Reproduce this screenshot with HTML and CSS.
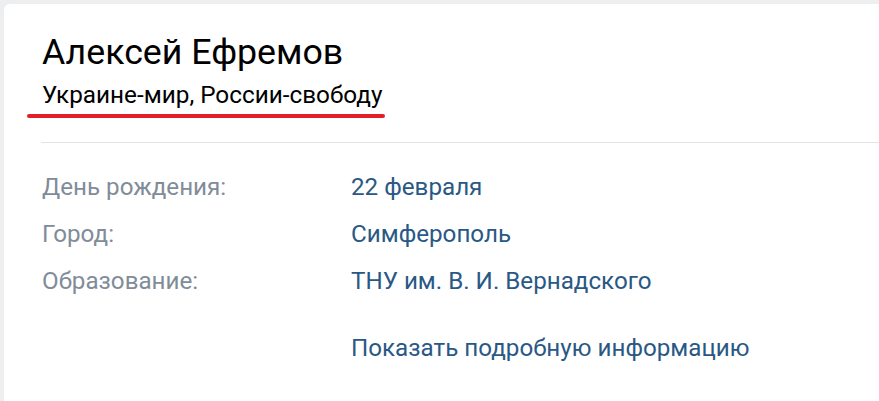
FILE: index.html
```html
<!DOCTYPE html>
<html lang="ru">
<head>
<meta charset="utf-8">
<link rel="stylesheet" href="styles.css">
</head>
<body>
<div class="card">
  <div class="header">
    <h1 class="name">Алексей Ефремов</h1>
    <div class="status">Украине-мир, России-свободу</div>
    <span class="underline"></span>
  </div>
  <div class="divider"></div>
  <div class="info">
    <div class="label">День рождения:</div><div class="value">22 февраля</div>
    <div class="label">Город:</div><div class="value">Симферополь</div>
    <div class="label">Образование:</div><div class="value">ТНУ им. В. И. Вернадского</div>
  </div>
  <div class="more">Показать подробную информацию</div>
</div>
</body>
</html>
```
FILE: styles.css
```css
html, body {
  margin: 0;
  padding: 0;
  background: #edeef0;
  overflow: hidden;
}
body {
  padding: 4px 0 0 4px;
  height: 401px;
  box-sizing: border-box;
  font-family: Roboto, "Noto Sans", sans-serif;
}
.card {
  background: #fff;
  border-radius: 6px 0 0 0;
  height: 100%;
  padding: 27px 0 0 38px;
  box-sizing: border-box;
}
.header {
  position: relative;
}
.name {
  margin: 0;
  font-weight: 400;
  font-size: 35.7px;
  line-height: 42px;
  color: #000;
}
.status {
  margin-top: 8px;
  font-size: 24.3px;
  line-height: 28px;
  color: #000;
}
.underline {
  position: absolute;
  left: -15px;
  top: 83px;
  width: 358px;
  height: 4px;
  border-radius: 2px;
  background: #e3202a;
}
.divider {
  margin-top: 33px;
  margin-left: -1px;
  height: 1px;
  background: #e1e3e6;
}
.info {
  display: grid;
  grid-template-columns: 309px auto;
  row-gap: 19px;
  margin-top: 30px;
  font-size: 24.2px;
  line-height: 28px;
}
.label { color: #818c99; }
.value { color: #2a5885; }
.more {
  margin: 39px 0 0 309px;
  font-size: 24.2px;
  line-height: 28px;
  color: #2a5885;
}
```
